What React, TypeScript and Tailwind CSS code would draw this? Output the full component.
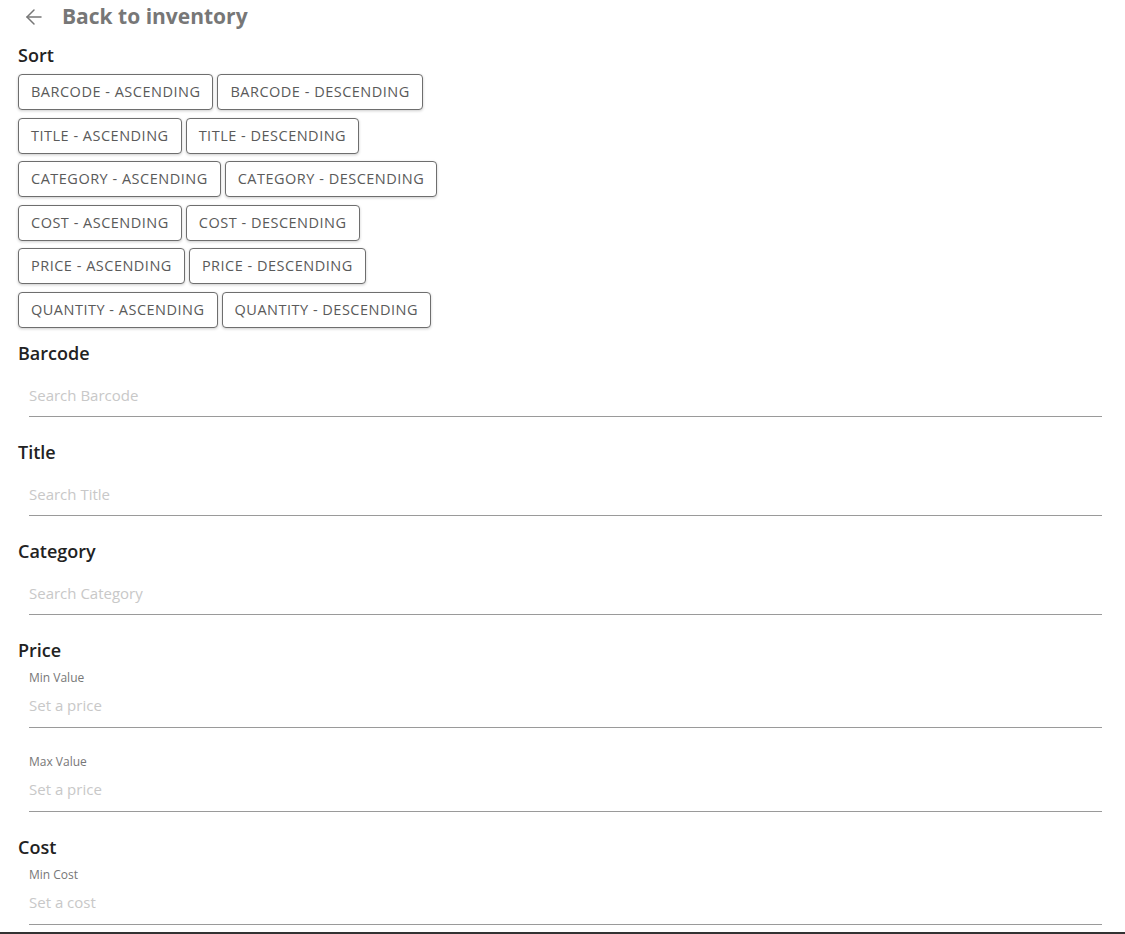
import { ArrowLeft } from 'lucide-react'

const sortFields = ['Barcode', 'Title', 'Category', 'Cost', 'Price', 'Quantity']

function TextField({ label, placeholder }: { label?: string; placeholder: string }) {
    return (
        <div className="ml-[11px] flex flex-col">
            {label && <span className="text-[12px] leading-4 text-[#777]">{label}</span>}
            <input
                placeholder={placeholder}
                className={`${label ? 'h-[42px]' : 'h-10'} w-full pb-[3px] border-b border-[#9a9a9a] bg-transparent text-[15px] text-[#333] outline-none placeholder:text-[#c8c8c8]`}
            />
        </div>
    )
}

function Heading({ children }: { children: string }) {
    return <h2 className="text-[18px] leading-6 font-semibold text-[#222]">{children}</h2>
}

export default function App() {
    return (
        <div className="min-h-[934px] bg-white font-['Open_Sans',sans-serif] flex flex-col">
            <div className="flex-1 pl-[18px] pr-[23px]">
                {/* header */}
                <div className="flex items-center h-[34px] gap-[16px] pl-[4px]">
                    <ArrowLeft className="w-6 h-6 text-[#777]" strokeWidth={1.5} />
                    <span className="text-[21px] font-bold text-[#777]">Back to inventory</span>
                </div>

                <div className="mt-[9px]">
                    <Heading>Sort</Heading>
                    <div className="mt-[7px] flex flex-col gap-[7.5px]">
                        {sortFields.map((field) => (
                            <div key={field} className="flex gap-1">
                                {['Ascending', 'Descending'].map((dir) => (
                                    <button
                                        key={dir}
                                        className="h-9 px-3 rounded-[4px] border border-[#6e6e6e] bg-white text-[14.5px] tracking-[0.5px] uppercase text-[#5a5a5a] shadow-[0_1px_3px_rgba(0,0,0,0.2)]"
                                    >
                                        {field} - {dir}
                                    </button>
                                ))}
                            </div>
                        ))}
                    </div>
                </div>

                <div className="mt-[13px] flex flex-col gap-[23px]">
                    <div className="flex flex-col gap-3">
                        <Heading>Barcode</Heading>
                        <TextField placeholder="Search Barcode" />
                    </div>
                    <div className="flex flex-col gap-3">
                        <Heading>Title</Heading>
                        <TextField placeholder="Search Title" />
                    </div>
                    <div className="flex flex-col gap-3">
                        <Heading>Category</Heading>
                        <TextField placeholder="Search Category" />
                    </div>
                    <div className="flex flex-col gap-[26px]">
                        <div className="flex flex-col gap-2">
                            <Heading>Price</Heading>
                            <TextField label="Min Value" placeholder="Set a price" />
                        </div>
                        <TextField label="Max Value" placeholder="Set a price" />
                    </div>
                    <div className="flex flex-col gap-2">
                        <Heading>Cost</Heading>
                        <TextField label="Min Cost" placeholder="Set a cost" />
                    </div>
                </div>
            </div>
            <div className="h-[2px] bg-[#333]" />
        </div>
    )
}
